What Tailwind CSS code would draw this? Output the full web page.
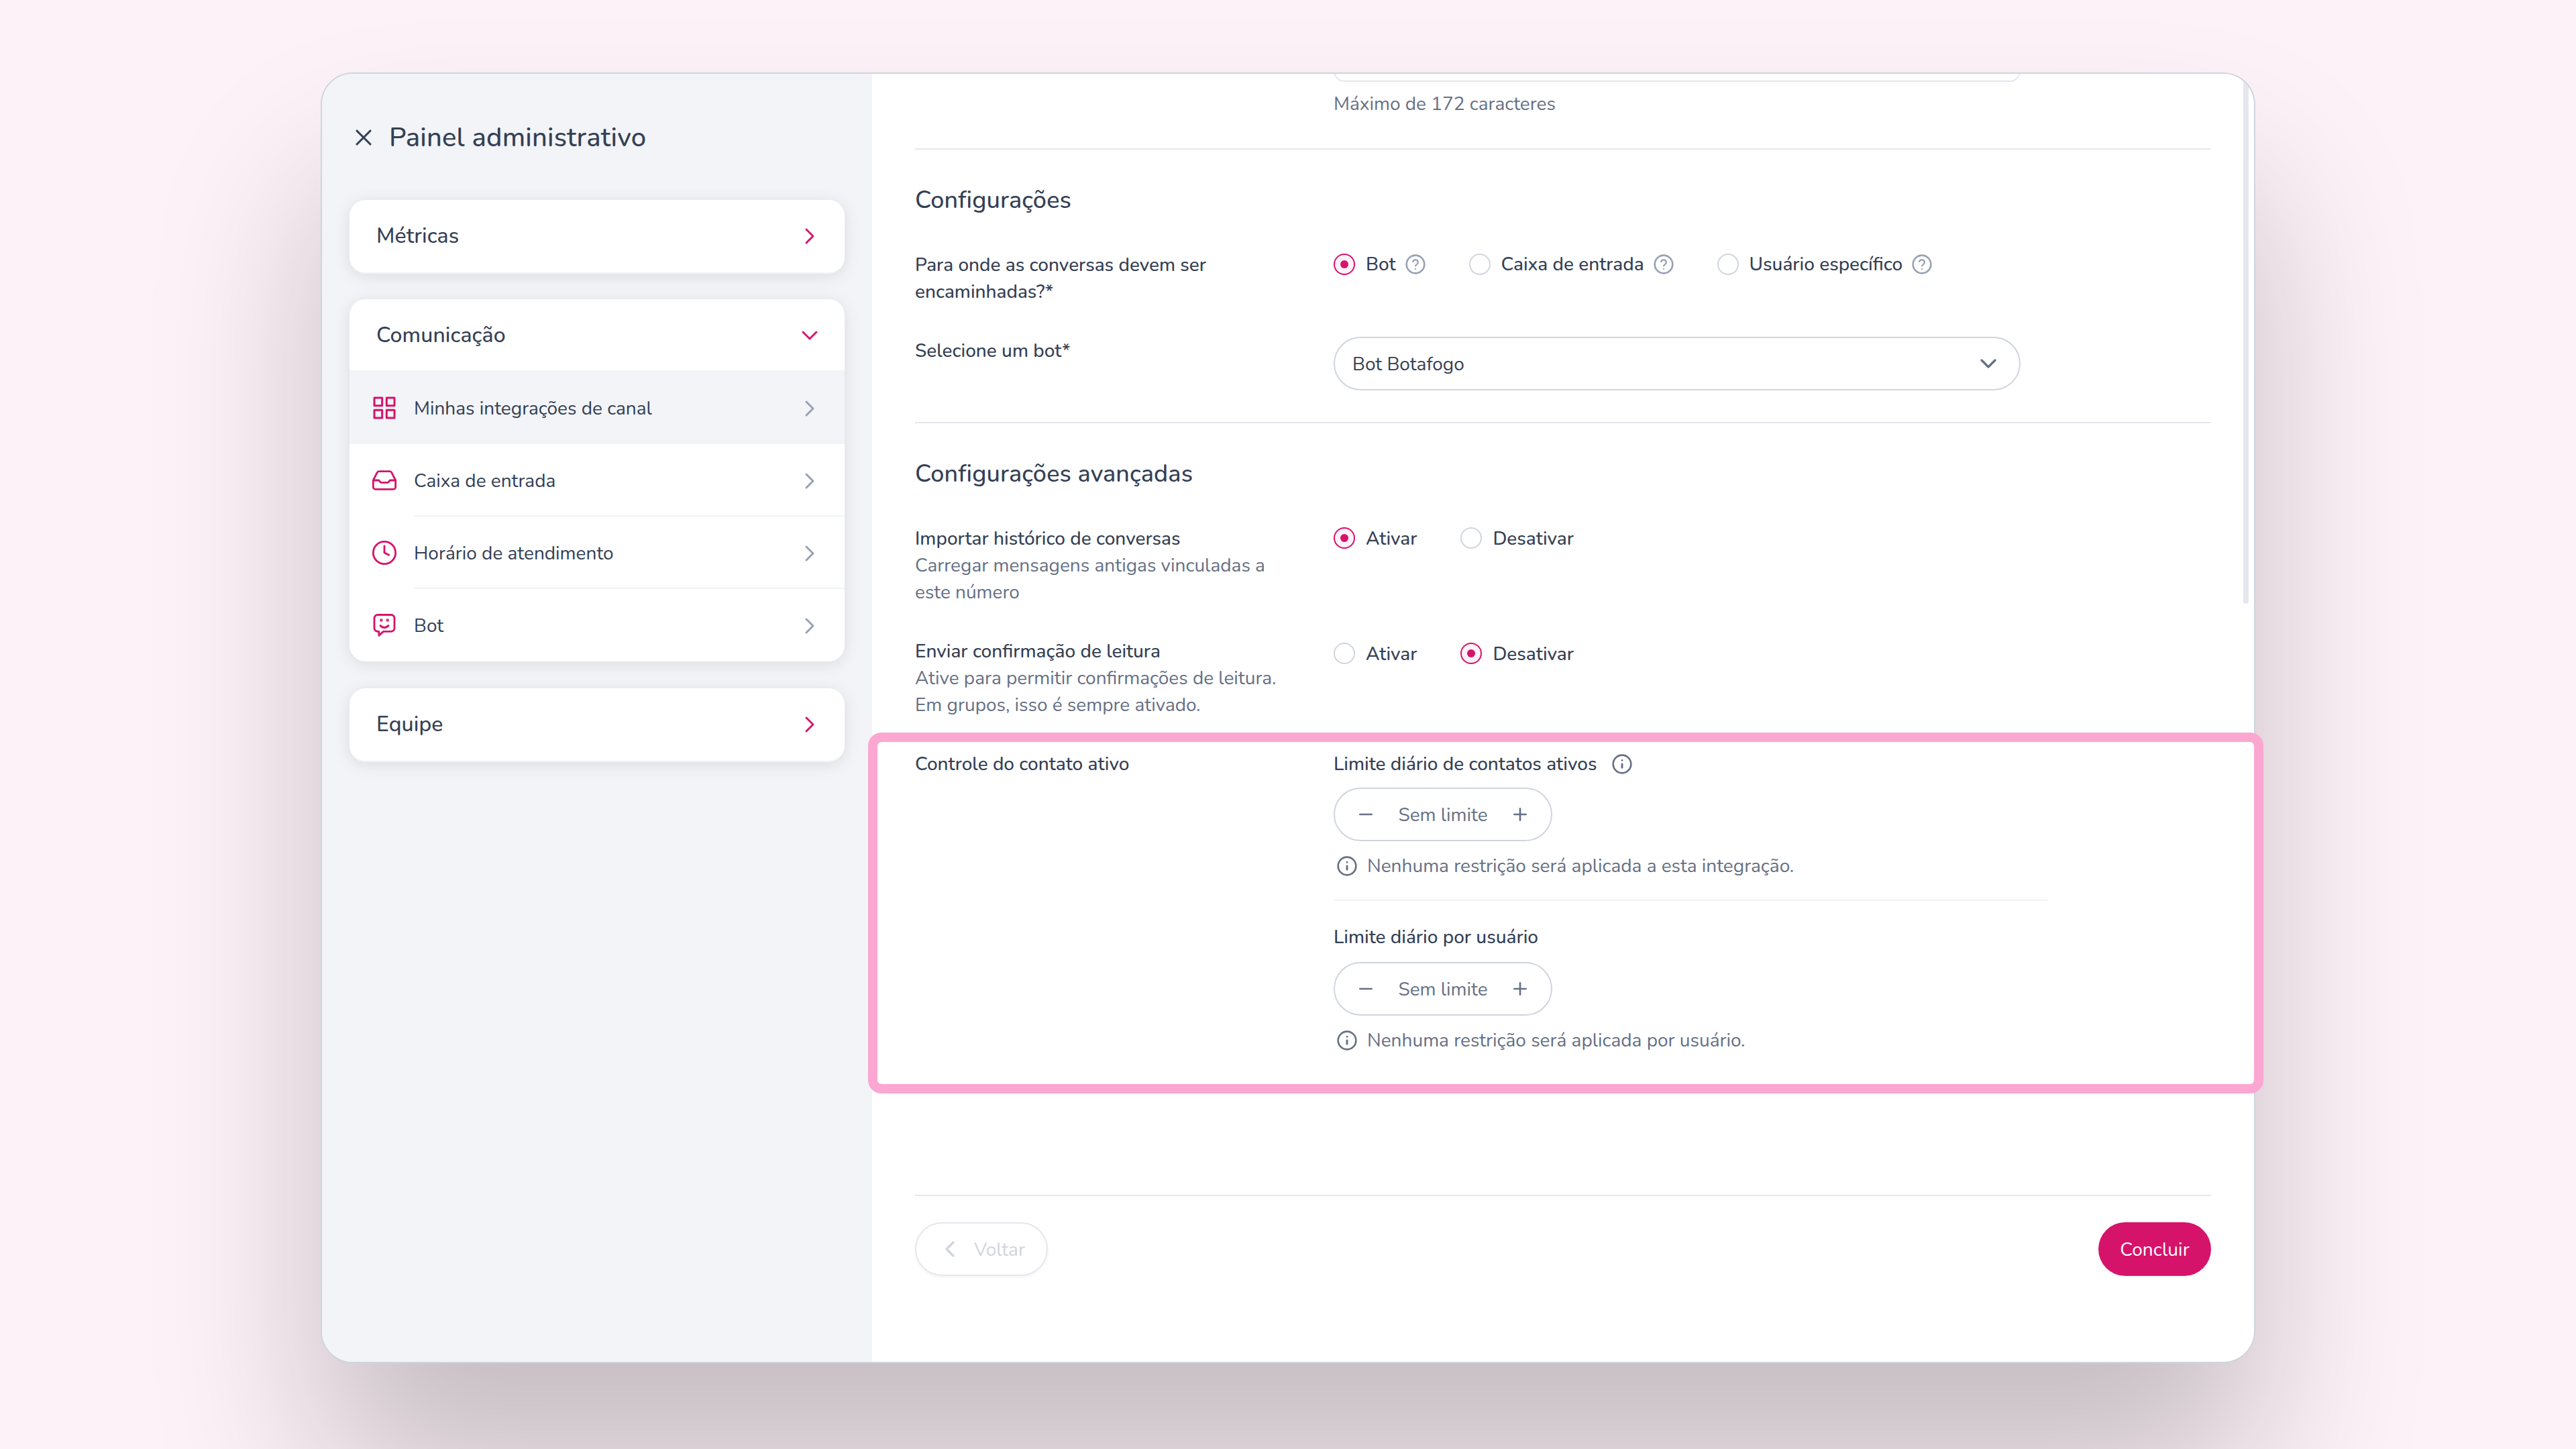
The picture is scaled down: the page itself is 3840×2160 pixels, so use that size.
<!DOCTYPE html>
<html lang="pt-BR">
<head>
    <meta charset="UTF-8">
    <meta name="viewport" content="width=device-width, initial-scale=1.0">
    <title>Painel administrativo</title>
    <script src="https://cdn.jsdelivr.net/npm/@tailwindcss/browser@4"></script>
</head>
<body class="bg-[#fdf2f8] font-['Nunito','Noto_Sans',sans-serif] text-[28px] leading-[40px] text-[#344054]">
    <!-- Shared icons -->
    <svg class="hidden">
        <symbol id="chevron-right" viewBox="0 0 24 24"><path d="M9 18l6-6-6-6"/></symbol>
        <symbol id="chevron-left" viewBox="0 0 24 24"><path d="M15 18l-6-6 6-6"/></symbol>
        <symbol id="chevron-down" viewBox="0 0 24 24"><path d="M6 9l6 6 6-6"/></symbol>
        <symbol id="help" viewBox="0 0 24 24"><circle cx="12" cy="12" r="10"/><path stroke-width="1.7" d="M9.1 9a3 3 0 0 1 5.8 1c0 2-2.9 2.6-2.9 3.8M12 17.2h.01"/></symbol>
        <symbol id="info" viewBox="0 0 24 24"><circle cx="12" cy="12" r="10"/><path stroke-width="2.2" d="M12 16v-4M12 7.8h.01"/></symbol>
        <symbol id="minus" viewBox="0 0 24 24"><path d="M5.5 12h13"/></symbol>
        <symbol id="plus" viewBox="0 0 24 24"><path d="M12 5.5v13M5.5 12h13"/></symbol>
    </svg>

    <div class="relative w-[3840px] h-[2160px] overflow-hidden pl-[478px] pt-[108px]">
        <div class="flex w-[2884px] h-[1924px] border-2 border-[#d0d5dd] rounded-[48px] bg-white overflow-hidden shadow-[0_170px_250px_rgba(0,0,0,0.22)]">

            <!-- Sidebar -->
            <aside class="w-[820px] shrink-0 bg-[#f2f4f7] pl-[41px] pr-[41px]">
                <div class="flex items-center gap-[18px] mt-[68px] h-[54px] pl-px">
                    <svg class="size-10 fill-none stroke-[#344054] stroke-[1.9] [stroke-linecap:round]" viewBox="0 0 24 24"><path d="M18 6L6 18M6 6l12 12"/></svg>
                    <h1 class="text-[40px] font-medium tracking-[0.2px]">Painel administrativo</h1>
                </div>

                <nav class="mt-[66px]">
                    <div class="flex items-center justify-between h-[110px] pl-10 pr-8 bg-white border-b-2 border-[#f2f4f7] rounded-3xl shadow-[0_4px_24px_rgba(16,24,40,0.1)]">
                        <span class="text-[32px] font-medium tracking-[0.1px]">Métricas</span>
                        <svg class="size-10 fill-none stroke-[#d6136a] stroke-[1.7] [stroke-linecap:round] [stroke-linejoin:round]"><use href="#chevron-right"/></svg>
                    </div>

                    <div class="mt-[38px] bg-white rounded-3xl overflow-hidden shadow-[0_4px_24px_rgba(16,24,40,0.1)]">
                        <div class="flex items-center justify-between h-[108px] pt-0.5 pl-10 pr-8 border-b-2 border-[#f2f4f7]">
                            <span class="text-[32px] font-medium tracking-[0.1px]">Comunicação</span>
                            <svg class="size-10 fill-none stroke-[#d6136a] stroke-[1.7] [stroke-linecap:round] [stroke-linejoin:round]"><use href="#chevron-down"/></svg>
                        </div>
                        <div class="flex items-center gap-6 pl-8 bg-[#f2f4f7]">
                            <svg class="size-10 fill-none stroke-[#d6136a] stroke-[1.8] [stroke-linejoin:round]" viewBox="0 0 24 24"><path d="M3 3h7v7H3zM14 3h7v7h-7zM14 14h7v7h-7zM3 14h7v7H3z"/></svg>
                            <div class="flex flex-1 items-center justify-between h-[108px] pt-0.5 pr-8">
                                <span>Minhas integrações de canal</span>
                                <svg class="size-10 fill-none stroke-[#98a2b3] stroke-[1.8] [stroke-linecap:round] [stroke-linejoin:round]"><use href="#chevron-right"/></svg>
                            </div>
                        </div>
                        <div class="flex items-center gap-6 pl-8">
                            <svg class="size-10 fill-none stroke-[#d6136a] stroke-[1.7] [stroke-linecap:round] [stroke-linejoin:round]" viewBox="0 0 24 24"><path d="M22 12h-4.6a1 1 0 0 0-.85.48l-.9 1.1a1.2 1.2 0 0 1-.9.42h-5.5a1.2 1.2 0 0 1-.9-.42l-.9-1.1A1 1 0 0 0 6.6 12H2"/><path d="M5.45 5.11L2 12v6a2 2 0 0 0 2 2h16a2 2 0 0 0 2-2v-6l-3.45-6.89A2 2 0 0 0 16.76 4H7.24a2 2 0 0 0-1.79 1.11z"/></svg>
                            <div class="flex flex-1 items-center justify-between h-[108px] pt-[3px] pr-8 border-b-2 border-[#f2f4f7]">
                                <span>Caixa de entrada</span>
                                <svg class="size-10 fill-none stroke-[#98a2b3] stroke-[1.8] [stroke-linecap:round] [stroke-linejoin:round]"><use href="#chevron-right"/></svg>
                            </div>
                        </div>
                        <div class="flex items-center gap-6 pl-8">
                            <svg class="size-10 fill-none stroke-[#d6136a] stroke-[1.7] [stroke-linecap:round] [stroke-linejoin:round]" viewBox="0 0 24 24"><circle cx="12" cy="12" r="10"/><path d="M12 6v6l4 2"/></svg>
                            <div class="flex flex-1 items-center justify-between h-[108px] pt-[3px] pr-8 border-b-2 border-[#f2f4f7]">
                                <span>Horário de atendimento</span>
                                <svg class="size-10 fill-none stroke-[#98a2b3] stroke-[1.8] [stroke-linecap:round] [stroke-linejoin:round]"><use href="#chevron-right"/></svg>
                            </div>
                        </div>
                        <div class="flex items-center gap-6 pl-8">
                            <svg class="size-10 fill-none stroke-[#d6136a] stroke-[1.7] [stroke-linecap:round] [stroke-linejoin:round]" viewBox="0 0 24 24"><path d="M7.1 17.6v3.6l4-3.6H18a3 3 0 0 0 3-3V5.7a3 3 0 0 0-3-3H6a3 3 0 0 0-3 3v8.9a3 3 0 0 0 3 3z"/><path d="M8.4 12.3c1 1.2 2.3 1.8 3.6 1.8s2.6-.6 3.6-1.8"/><circle cx="9.2" cy="7.5" r=".5"/><circle cx="14.8" cy="7.5" r=".5"/></svg>
                            <div class="flex flex-1 items-center justify-between h-[108px] pt-0.5 pr-8">
                                <span>Bot</span>
                                <svg class="size-10 fill-none stroke-[#98a2b3] stroke-[1.8] [stroke-linecap:round] [stroke-linejoin:round]"><use href="#chevron-right"/></svg>
                            </div>
                        </div>
                    </div>

                    <div class="flex items-center justify-between h-[110px] mt-10 pl-10 pr-8 bg-white border-b-2 border-[#f2f4f7] rounded-3xl shadow-[0_4px_24px_rgba(16,24,40,0.1)]">
                        <span class="text-[32px] font-medium tracking-[0.1px]">Equipe</span>
                        <svg class="size-10 fill-none stroke-[#d6136a] stroke-[1.7] [stroke-linecap:round] [stroke-linejoin:round]"><use href="#chevron-right"/></svg>
                    </div>
                </nav>
            </aside>

            <!-- Form -->
            <main class="relative flex flex-1 flex-col px-16">
                <div class="pl-[624px]">
                    <div class="w-[1024px] h-12 -mt-9 border-2 border-[#e4e7ec] rounded-2xl"></div>
                    <p class="mt-[13px] text-[#667085]">Máximo de 172 caracteres</p>
                </div>

                <section class="mt-[46px] border-t-2 border-[#e4e7ec]">
                    <h2 class="mt-[51px] text-[36px] leading-[50px] font-medium tracking-[0.12px]">Configurações</h2>
                    <div class="flex mt-[51px] font-medium">
                        <div class="w-[624px] pr-20">Para onde as conversas devem ser encaminhadas?*</div>
                        <div class="flex items-center gap-16 h-[38px]">
                            <label class="flex items-center gap-4">
                                <span class="flex size-8 items-center justify-center rounded-full border-2 border-[#d6136a] bg-[#fdf2f8]"><span class="size-3 rounded-full bg-[#d6136a]"></span></span>
                                Bot
                                <svg class="-ml-[3px] size-8 fill-none stroke-[#98a2b3] stroke-2 [stroke-linecap:round] [stroke-linejoin:round]"><use href="#help"/></svg>
                            </label>
                            <label class="flex items-center gap-4">
                                <span class="size-8 rounded-full border-2 border-[#d0d5dd]"></span>
                                Caixa de entrada
                                <svg class="-ml-[3px] size-8 fill-none stroke-[#98a2b3] stroke-2 [stroke-linecap:round] [stroke-linejoin:round]"><use href="#help"/></svg>
                            </label>
                            <label class="flex items-center gap-4">
                                <span class="size-8 rounded-full border-2 border-[#d0d5dd]"></span>
                                Usuário específico
                                <svg class="-ml-[3px] size-8 fill-none stroke-[#98a2b3] stroke-2 [stroke-linecap:round] [stroke-linejoin:round]"><use href="#help"/></svg>
                            </label>
                        </div>
                    </div>
                    <div class="flex mt-[47px]">
                        <div class="w-[624px] pt-px font-medium">Selecione um bot*</div>
                        <div class="flex items-center justify-between w-[1024px] h-20 px-[26px] border-2 border-[#d0d5dd] rounded-full">
                            <span class="pt-0.5">Bot Botafogo</span>
                            <svg class="size-10 fill-none stroke-[#667085] stroke-2 [stroke-linecap:round] [stroke-linejoin:round]"><use href="#chevron-down"/></svg>
                        </div>
                    </div>
                </section>

                <section class="mt-[47px] border-t-2 border-[#e4e7ec]">
                    <h2 class="mt-[51px] text-[36px] leading-[50px] font-medium tracking-[0.12px]">Configurações avançadas</h2>
                    <div class="flex mt-[51px] font-medium">
                        <div class="w-[624px] pr-20">
                            <p>Importar histórico de conversas</p>
                            <p class="font-normal text-[#667085]">Carregar mensagens antigas vinculadas a este número</p>
                        </div>
                        <div class="flex items-center gap-[65px] h-[38px]">
                            <label class="flex items-center gap-4">
                                <span class="flex size-8 items-center justify-center rounded-full border-2 border-[#d6136a] bg-[#fdf2f8]"><span class="size-3 rounded-full bg-[#d6136a]"></span></span>
                                <span class="pt-px">Ativar</span>
                            </label>
                            <label class="flex items-center gap-4">
                                <span class="size-8 rounded-full border-2 border-[#d0d5dd]"></span>
                                <span class="pt-px">Desativar</span>
                            </label>
                        </div>
                    </div>
                    <div class="flex mt-12 font-medium">
                        <div class="w-[624px] pr-16">
                            <p>Enviar confirmação de leitura</p>
                            <p class="font-normal text-[#667085]">Ative para permitir confirmações de leitura. Em grupos, isso é sempre ativado.</p>
                        </div>
                        <div class="flex items-center gap-[65px] h-[38px] mt-1">
                            <label class="flex items-center gap-4">
                                <span class="size-8 rounded-full border-2 border-[#d0d5dd]"></span>
                                <span class="pt-px">Ativar</span>
                            </label>
                            <label class="flex items-center gap-4">
                                <span class="flex size-8 items-center justify-center rounded-full border-2 border-[#d6136a] bg-[#fdf2f8]"><span class="size-3 rounded-full bg-[#d6136a]"></span></span>
                                <span class="pt-px">Desativar</span>
                            </label>
                        </div>
                    </div>
                    <div class="flex mt-12">
                        <p class="w-[624px] font-medium">Controle do contato ativo</p>
                        <div class="w-[1064px]">
                            <div class="flex items-center gap-[22px] font-medium">
                                Limite diário de contatos ativos
                                <svg class="size-8 fill-none stroke-[#667085] stroke-2 [stroke-linecap:round]"><use href="#info"/></svg>
                            </div>
                            <div class="flex items-center justify-between w-[326px] h-20 mt-[15px] px-[30px] border-2 border-[#d0d5dd] rounded-full text-[#667085]">
                                <svg class="size-8 fill-none stroke-[#667085] stroke-2 [stroke-linecap:round]"><use href="#minus"/></svg>
                                <span class="pt-0.5">Sem limite</span>
                                <svg class="size-8 fill-none stroke-[#667085] stroke-2 [stroke-linecap:round]"><use href="#plus"/></svg>
                            </div>
                            <div class="flex items-center gap-3.5 mt-[17px] pl-1 text-[#667085]">
                                <svg class="size-8 fill-none stroke-[#667085] stroke-2 [stroke-linecap:round]"><use href="#info"/></svg>
                                Nenhuma restrição será aplicada a esta integração.
                            </div>
                            <hr class="mt-[30px] border-t-2 border-[#f2f4f7]">
                            <p class="mt-[34px] font-medium">Limite diário por usuário</p>
                            <div class="flex items-center justify-between w-[326px] h-20 mt-[17px] px-[30px] border-2 border-[#d0d5dd] rounded-full text-[#667085]">
                                <svg class="size-8 fill-none stroke-[#667085] stroke-2 [stroke-linecap:round]"><use href="#minus"/></svg>
                                <span class="pt-0.5">Sem limite</span>
                                <svg class="size-8 fill-none stroke-[#667085] stroke-2 [stroke-linecap:round]"><use href="#plus"/></svg>
                            </div>
                            <div class="flex items-center gap-3.5 mt-[17px] pl-1 text-[#667085]">
                                <svg class="size-8 fill-none stroke-[#667085] stroke-2 [stroke-linecap:round]"><use href="#info"/></svg>
                                Nenhuma restrição será aplicada por usuário.
                            </div>
                        </div>
                    </div>
                </section>

                <footer class="flex justify-between mt-auto mb-32 pt-[39px] border-t-2 border-[#e4e7ec]">
                    <button class="flex items-center gap-4 w-[198px] h-20 pl-[30px] border-2 border-[#e4e7ec] rounded-full text-[#d0d5dd] shadow-[0_2px_4px_rgba(16,24,40,0.05)]">
                        <svg class="size-10 fill-none stroke-[#d0d5dd] stroke-2 [stroke-linecap:round] [stroke-linejoin:round]"><use href="#chevron-left"/></svg>
                        <span class="pt-px">Voltar</span>
                    </button>
                    <button class="w-[168px] h-20 pt-0.5 rounded-full bg-[#d6136a] text-white tracking-[0.1px] shadow-[0_2px_4px_rgba(16,24,40,0.05)]">Concluir</button>
                </footer>

                <!-- Scrollbar thumb -->
                <div class="absolute top-0 right-2 w-2 h-[790px] rounded-b-full bg-[#e4e7ec]"></div>
            </main>
        </div>

        <!-- Highlight frame -->
        <div class="absolute left-[1294px] top-[1092px] w-[2080px] h-[538px] border-[14px] border-[#fba7d1] rounded-[20px]"></div>
    </div>
</body>
</html>
